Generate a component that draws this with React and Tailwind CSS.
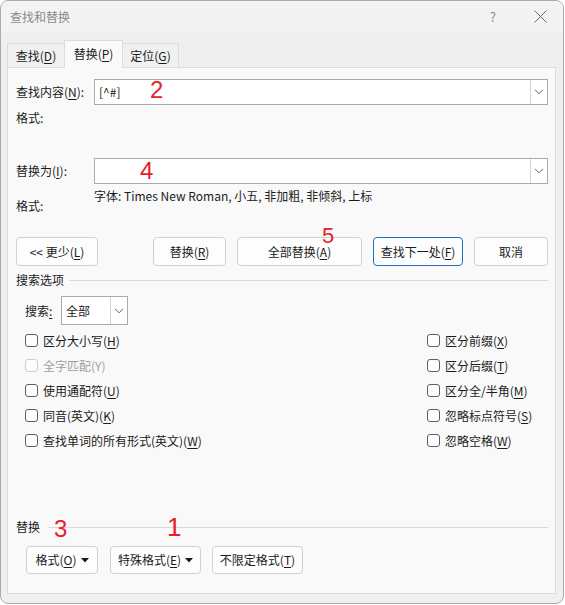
import React from "react";

const FONT = "font-['Noto_Sans_CJK_SC','Noto_Sans',sans-serif]";

function Key({ children }) {
  return <span className="underline underline-offset-[2px] decoration-[1px]">{children}</span>;
}

function Chevron() {
  return (
    <svg width="10" height="6" viewBox="0 0 10 6" fill="none">
      <path d="M1 0.8L5 4.8L9 0.8" stroke="#606060" strokeWidth="1" />
    </svg>
  );
}

function Caret() {
  return (
    <svg width="8" height="5" viewBox="0 0 8 5" className="ml-[4px]">
      <path d="M0 0H8L4 4.5Z" fill="#1b1b1b" />
    </svg>
  );
}

function ComboBox({ value, className = "" }) {
  return (
    <div className={`flex border border-[#ababab] bg-white ${className}`}>
      <div className="flex-1 flex items-center pl-[4px]">{value}</div>
      <div className="w-[17px] border-l border-[#d2d2d2] flex items-center justify-center">
        <Chevron />
      </div>
    </div>
  );
}

function Btn({ children, className = "" }) {
  return (
    <div
      className={`flex items-center justify-center rounded-[4px] border bg-[#fdfdfd] ${className}`}
    >
      {children}
    </div>
  );
}

function Check({ children, disabled }) {
  return (
    <div className={`h-[25px] flex items-center ${disabled ? "text-[#a0a0a0]" : "text-[#1b1b1b]"}`}>
      <span
        className={`w-[13px] h-[13px] rounded-[3px] border bg-[#fdfdfd] ${
          disabled ? "border-[#cfcfcf]" : "border-[#5f5f5f]"
        }`}
      />
      <span className="ml-[5px]">{children}</span>
    </div>
  );
}

function Mark({ n, className }) {
  return (
    <span
      className={`absolute leading-none text-[#e8202a] font-['Liberation_Sans',sans-serif] ${className}`}
    >
      {n}
    </span>
  );
}

export default function App() {
  return (
    <div className={`relative w-[565px] h-[605px] bg-white text-[12px] leading-[16px] text-[#1b1b1b] ${FONT}`}>
      <div className="w-[564px] h-[604px] rounded-[8px] border border-[#ababab] bg-[#efefef] overflow-hidden flex flex-col">
        {/* title bar */}
        <div className="h-[31px] bg-[#f3f3f3] flex items-center pl-[9px]">
          <span className="text-[#8a8a8a]">查找和替换</span>
          <span className="ml-auto mr-[38px] text-[#8a8a8a] text-[13px]">?</span>
          <svg width="13" height="13" viewBox="0 0 13 13" className="mr-[16px]">
            <path d="M0.5 0.5L12.5 12.5M12.5 0.5L0.5 12.5" stroke="#6a6a6a" strokeWidth="1" />
          </svg>
        </div>

        {/* tabs */}
        <div className="mt-[8px] h-[27px] flex items-end pl-[6px]">
          <div className="w-[58px] h-[24px] flex items-center justify-center border border-b-0 border-[#dcdcdc] bg-[#f0f0f0]">
            查找(<Key>D</Key>)
          </div>
          <div className="relative z-10 -mb-px w-[59px] h-[28px] flex items-center justify-center border border-b-0 border-[#dcdcdc] bg-[#f9f9f9] -ml-px pb-[2px]">
            替换(<Key>P</Key>)
          </div>
          <div className="w-[57px] h-[24px] flex items-center justify-center border border-b-0 border-[#dcdcdc] bg-[#f0f0f0] -ml-px">
            定位(<Key>G</Key>)
          </div>
        </div>

        {/* tab page */}
        <div className="ml-[6px] w-[549px] h-[527px] border border-[#dcdcdc] bg-[#f9f9f9] pl-[8px] pr-[7px] flex flex-col">
          <div className="mt-[11px] flex items-center">
            <div className="w-[78px]">
              查找内容(<Key>N</Key>):
            </div>
            <ComboBox className="flex-1 h-[26px]" value="[^#]" />
          </div>
          <div className="mt-[5px]">格式:</div>

          <div className="mt-[32px] flex items-center">
            <div className="w-[78px]">
              替换为(<Key>I</Key>):
            </div>
            <ComboBox className="flex-1 h-[26px]" value="" />
          </div>
          <div className="mt-[4px] flex items-start">
            <div className="w-[78px] pt-[10px]">格式:</div>
            <div>字体: Times New Roman, 小五, 非加粗, 非倾斜, 上标</div>
          </div>

          {/* action buttons */}
          <div className="mt-[23px] flex">
            <Btn className="w-[82px] h-[29px] border-[#d1d1d1]">
              &lt;&lt; 更少(<Key>L</Key>)
            </Btn>
            <Btn className="ml-[55px] w-[73px] h-[29px] border-[#d1d1d1]">
              替换(<Key>R</Key>)
            </Btn>
            <Btn className="ml-[11px] w-[125px] h-[29px] border-[#d1d1d1]">
              全部替换(<Key>A</Key>)
            </Btn>
            <Btn className="ml-[11px] w-[90px] h-[29px] border-[#1f6fc1]">
              查找下一处(<Key>F</Key>)
            </Btn>
            <Btn className="ml-[11px] w-[74px] h-[29px] border-[#d1d1d1]">取消</Btn>
          </div>

          {/* search options */}
          <div className="mt-[6px] flex items-center">
            <span>搜索选项</span>
            <div className="ml-[5px] flex-1 h-px bg-[#dadada]" />
          </div>
          <div className="mt-[8px] pl-[9px] flex items-center">
            <span className="w-[36px]">
              搜索<Key>:</Key>
            </span>
            <ComboBox className="w-[67px] h-[29px]" value="全部" />
          </div>

          <div className="mt-[3px] pl-[9px] flex">
            <div className="flex-1 flex flex-col">
              <Check>
                区分大小写(<Key>H</Key>)
              </Check>
              <Check disabled>全字匹配(Y)</Check>
              <Check>
                使用通配符(<Key>U</Key>)
              </Check>
              <Check>
                同音(英文)(<Key>K</Key>)
              </Check>
              <Check>
                查找单词的所有形式(英文)(<Key>W</Key>)
              </Check>
            </div>
            <div className="w-[121px] flex flex-col">
              <Check>
                区分前缀(<Key>X</Key>)
              </Check>
              <Check>
                区分后缀(<Key>T</Key>)
              </Check>
              <Check>
                区分全/半角(<Key>M</Key>)
              </Check>
              <Check>
                忽略标点符号(<Key>S</Key>)
              </Check>
              <Check>
                忽略空格(<Key>W</Key>)
              </Check>
            </div>
          </div>

          {/* replace formatting */}
          <div className="mt-[66px] flex items-center">
            <span>替换</span>
            <div className="ml-[8px] flex-1 h-px bg-[#dadada]" />
          </div>
          <div className="mt-[11px] pl-[10px] flex">
            <Btn className="w-[72px] h-[28px] border-[#d1d1d1]">
              格式(<Key>O</Key>)
              <Caret />
            </Btn>
            <Btn className="ml-[12px] w-[91px] h-[28px] border-[#d1d1d1]">
              特殊格式(<Key>E</Key>)
              <Caret />
            </Btn>
            <Btn className="ml-[11px] w-[91px] h-[28px] border-[#d1d1d1]">
              不限定格式(<Key>T</Key>)
            </Btn>
          </div>
        </div>
      </div>

      {/* red step numbers */}
      <Mark n="2" className="left-[150px] top-[78px] text-[24px]" />
      <Mark n="4" className="left-[140px] top-[159px] text-[24px]" />
      <Mark n="5" className="left-[322px] top-[225px] text-[22px]" />
      <Mark n="3" className="left-[54px] top-[517px] text-[24px]" />
      <Mark n="1" className="left-[167px] top-[514px] text-[26px]" />
    </div>
  );
}
